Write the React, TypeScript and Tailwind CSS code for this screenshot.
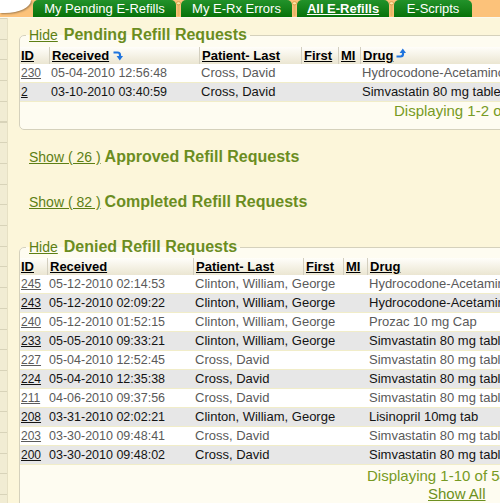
import React from "react";

type Row = { id: string; date: string; patient: string; drug: string };

const pending: Row[] = [
  { id: "230", date: "05-04-2010 12:56:48", patient: "Cross, David", drug: "Hydrocodone-Acetaminophen 5-500" },
  { id: "2", date: "03-10-2010 03:40:59", patient: "Cross, David", drug: "Simvastatin 80 mg tablet" },
];

const denied: Row[] = [
  { id: "245", date: "05-12-2010 02:14:53", patient: "Clinton, William, George", drug: "Hydrocodone-Acetaminophen" },
  { id: "243", date: "05-12-2010 02:09:22", patient: "Clinton, William, George", drug: "Hydrocodone-Acetaminophen" },
  { id: "240", date: "05-12-2010 01:52:15", patient: "Clinton, William, George", drug: "Prozac 10 mg Cap" },
  { id: "233", date: "05-05-2010 09:33:21", patient: "Clinton, William, George", drug: "Simvastatin 80 mg tablet" },
  { id: "227", date: "05-04-2010 12:52:45", patient: "Cross, David", drug: "Simvastatin 80 mg tablet" },
  { id: "224", date: "05-04-2010 12:35:38", patient: "Cross, David", drug: "Simvastatin 80 mg tablet" },
  { id: "211", date: "04-06-2010 09:37:56", patient: "Cross, David", drug: "Simvastatin 80 mg tablet" },
  { id: "208", date: "03-31-2010 02:02:21", patient: "Clinton, William, George", drug: "Lisinopril 10mg tab" },
  { id: "203", date: "03-30-2010 09:48:41", patient: "Cross, David", drug: "Simvastatin 80 mg tablet" },
  { id: "200", date: "03-30-2010 09:48:02", patient: "Cross, David", drug: "Simvastatin 80 mg tablet" },
];

function SortDown() {
  return (
    <svg width="10" height="11" viewBox="0 0 10 11" className="inline-block ml-[4px] align-[-1px]">
      <path d="M0.5 2.5 H4.5 Q7 2.5 7 5 V6.5" stroke="#1f74de" strokeWidth="2.2" fill="none" />
      <polygon points="3.6,6 10,6 6.8,10.5" fill="#1f74de" />
    </svg>
  );
}

function SortUp() {
  return (
    <svg width="10" height="11" viewBox="0 0 10 11" className="inline-block ml-[3px] align-[1px]">
      <path d="M0.5 8.5 H4.5 Q7 8.5 7 6 V4.5" stroke="#1f74de" strokeWidth="2.2" fill="none" />
      <polygon points="3.6,5 10,5 6.8,0.5" fill="#1f74de" />
    </svg>
  );
}

function Pin() {
  return (
    <div className="w-[5px] h-[17px] flex justify-center">
      <svg width="6" height="17" viewBox="0 0 6 17">
        <path d="M3 3 V17" stroke="#c98a2c" strokeWidth="1.6" />
        <path d="M3 3.5 V17" stroke="#fde6a6" strokeWidth="0.6" />
        <ellipse cx="3" cy="2.2" rx="2.6" ry="1.9" fill="#fde6a6" stroke="#c98a2c" strokeWidth="0.7" />
      </svg>
    </div>
  );
}

function Tab({ w, children, active }: { w: string; children: React.ReactNode; active?: boolean }) {
  return (
    <div
      className={`${w} h-[17px] rounded-t-[5px] bg-linear-to-b from-[#22922a] to-[#077207] text-white text-[13px] leading-[17px] text-center whitespace-nowrap ${
        active ? "font-bold underline" : ""
      }`}
    >
      {children}
    </div>
  );
}

function Table({ rows, widths, icons }: { rows: Row[]; widths: string[]; icons?: boolean }) {
  const [wId, wRec, wPat, wFirst, wMi] = widths;
  const hc = "h-full pl-[2px] border-l border-[#d3cfbf]";
  return (
    <div className="w-full">
      <div className="flex h-[17px] leading-[17px] text-[13px] font-bold text-black bg-linear-to-b from-[#fffefa] to-[#ebe6d2] whitespace-nowrap">
        <div className={`${wId} shrink-0 pl-[1px]`}>
          <span className="underline">ID</span>
        </div>
        <div className={`${wRec} shrink-0 ${hc}`}>
          <span className="underline">Received</span>
          {icons && <SortDown />}
        </div>
        <div className={`${wPat} shrink-0 ${hc}`}>
          <span className="underline">Patient- Last</span>
        </div>
        <div className={`${wFirst} shrink-0 ${hc}`}>
          <span className="underline">First</span>
        </div>
        <div className={`${wMi} shrink-0 ${hc}`}>
          <span className="underline">MI</span>
        </div>
        <div className={`flex-1 ${hc}`}>
          <span className="underline">Drug</span>
          {icons && <SortUp />}
        </div>
      </div>
      {rows.map((r, i) => {
        const odd = i % 2 === 0;
        return (
          <div
            key={r.id}
            className={`flex h-[19px] leading-[18px] border-b border-[#f1edc9] whitespace-nowrap ${
              odd ? "bg-white text-[#5a5a5a]" : "bg-[#e7e7e7] text-[#141414]"
            }`}
          >
            <div className={`${wId} shrink-0 pl-[1px] text-[12px]`}>
              <span className="underline">{r.id}</span>
            </div>
            <div className={`${wRec} shrink-0 pl-[2px] text-[12.5px]`}>{r.date}</div>
            <div className={`${wPat} shrink-0 pl-[2px] text-[13px]`}>{r.patient}</div>
            <div className={`${wFirst} shrink-0`} />
            <div className={`${wMi} shrink-0`} />
            <div className="flex-1 pl-[2px] text-[13px]">{r.drug}</div>
          </div>
        );
      })}
    </div>
  );
}

function Legend({ action, title }: { action: string; title: string }) {
  return (
    <legend className="ml-[6px] px-[3px] leading-[18px] whitespace-nowrap">
      <span className="text-[14px] underline text-[#5d7f14]">{action}</span>
      <span className="ml-[6px] text-[16px] font-bold text-[#6b8d1f]">{title}</span>
    </legend>
  );
}

export default function App() {
  return (
    <div className="w-[500px] h-[503px] overflow-hidden flex flex-col bg-[#fcf6da] font-['Liberation_Sans',Arial,sans-serif]">
      {/* Tab bar */}
      <div className="flex h-[17px] shrink-0 bg-[#fcc27a]">
        <div className="w-[33px] h-[17px] shrink-0">
          <div className="w-[31px] h-[13px] bg-white rounded-br-[26px_13px] shadow-[1px_1px_2px_rgba(0,0,0,0.35)]" />
        </div>
        <Tab w="w-[143px]">My Pending E-Refills</Tab>
        <Pin />
        <Tab w="w-[111px]">My E-Rx Errors</Tab>
        <Pin />
        <Tab w="w-[92px]" active>
          All E-Refills
        </Tab>
        <Pin />
        <Tab w="w-[78px]">E-Scripts</Tab>
      </div>
      <div className="h-[1px] shrink-0 bg-[#fbf9ee]" />

      <div className="flex flex-1 min-h-0">
        <div className="w-[8px] shrink-0 border-r border-[#e6e0c4] bg-[image:repeating-linear-gradient(to_bottom,#d8d3b9_0px,#d8d3b9_1px,#f1ecd3_1px,#f1ecd3_20.7px)]" />
        <div className="flex-1 overflow-hidden pl-[11px]">
          {/* Pending */}
          <fieldset className="mt-[8px] w-[620px] min-w-0 border border-[#d5d1bc] rounded-[5px] bg-[#fefcf1] pb-[9px]">
            <Legend action="Hide" title="Pending Refill Requests" />
            <div className="mt-[3px]">
              <Table rows={pending} widths={["w-[29px]", "w-[150px]", "w-[102px]", "w-[37px]", "w-[22px]"]} icons />
            </div>
            <div className="pl-[374px] text-[15px] leading-[18px] text-[#779a24] whitespace-nowrap">
              Displaying 1-2 of 2
            </div>
          </fieldset>

          {/* Approved */}
          <div className="mt-[18px] pl-[10px] leading-[18px] whitespace-nowrap">
            <span className="text-[14px] underline text-[#5d7f14]">Show ( 26 )</span>
            <span className="ml-[4px] text-[16px] font-bold text-[#6b8d1f]">Approved Refill Requests</span>
          </div>

          {/* Completed */}
          <div className="mt-[27px] pl-[10px] leading-[18px] whitespace-nowrap">
            <span className="text-[14px] underline text-[#5d7f14]">Show ( 82 )</span>
            <span className="ml-[4px] text-[16px] font-bold text-[#6b8d1f]">Completed Refill Requests</span>
          </div>

          {/* Denied */}
          <fieldset className="mt-[27px] w-[620px] min-w-0 border border-[#d5d1bc] rounded-[5px] bg-[#fefcf1] pb-[20px]">
            <Legend action="Hide" title="Denied Refill Requests" />
            <div className="mt-[2px]">
              <Table rows={denied} widths={["w-[27px]", "w-[146px]", "w-[110px]", "w-[40px]", "w-[24px]"]} />
            </div>
            <div className="mt-[2px] pl-[347px] text-[15px] leading-[18px] text-[#779a24] whitespace-nowrap">
              Displaying 1-10 of 54
            </div>
            <div className="pl-[408px] text-[15px] leading-[18px] whitespace-nowrap">
              <span className="underline text-[#6d9020]">Show All</span>
            </div>
          </fieldset>
        </div>
      </div>
    </div>
  );
}
